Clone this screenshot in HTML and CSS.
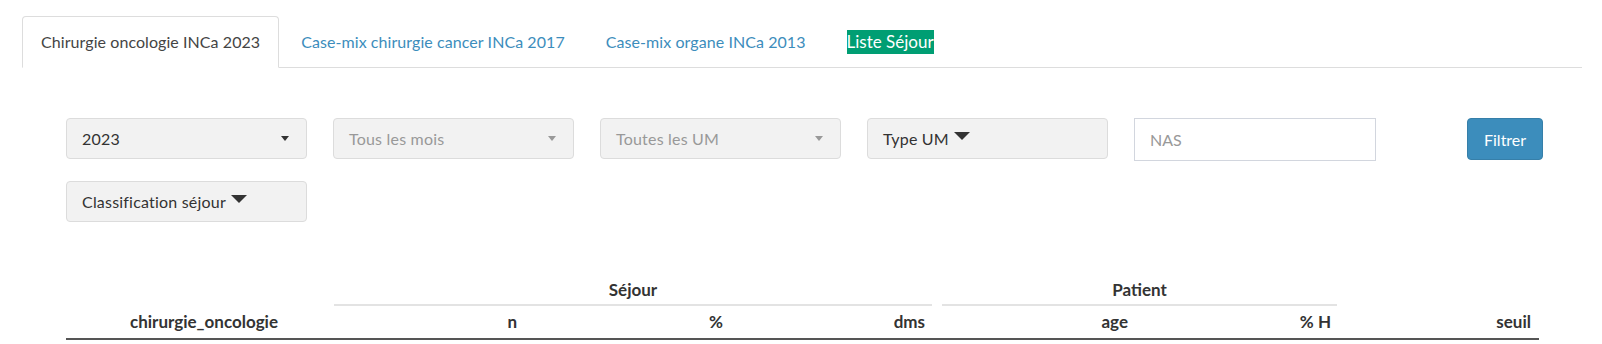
FILE: index.html
```html
<!DOCTYPE html>
<html lang="fr">
<head>
  <meta charset="UTF-8" />
  <title>Chirurgie oncologie</title>
  <link rel="stylesheet" href="styles.css">
</head>
<body>
  <ul class="nav-tabs">
    <li class="active"><a href="#">Chirurgie oncologie INCa 2023</a></li>
    <li><a href="#">Case-mix chirurgie cancer INCa 2017</a></li>
    <li><a href="#">Case-mix organe INCa 2013</a></li>
    <li><a href="#"><span class="tag-green">Liste Séjour</span></a></li>
  </ul>

  <div class="filters">
    <div class="select"><span>2023</span><i class="arrow"></i></div>
    <div class="select disabled"><span>Tous les mois</span><i class="arrow"></i></div>
    <div class="select disabled"><span>Toutes les UM</span><i class="arrow"></i></div>
    <div class="dropdown">Type UM <i class="caret"></i></div>
    <input class="form-control" type="text" placeholder="NAS" />
    <button class="btn-primary" type="button">Filtrer</button>
    <div class="dropdown">Classification séjour <i class="caret"></i></div>
  </div>

  <table class="stats">
    <colgroup>
      <col class="c-first"><col class="c-n"><col class="c-pct"><col class="c-dms">
      <col class="c-age"><col class="c-h"><col class="c-seuil">
    </colgroup>
    <thead>
      <tr class="groups">
        <th></th>
        <th colspan="3"><div class="group sejour">Séjour</div></th>
        <th colspan="2"><div class="group patient">Patient</div></th>
        <th></th>
      </tr>
      <tr class="cols">
        <th class="first">chirurgie_oncologie</th>
        <th>n</th>
        <th>%</th>
        <th>dms</th>
        <th>age</th>
        <th>% H</th>
        <th>seuil</th>
      </tr>
    </thead>
  </table>
</body>
</html>
```
FILE: styles.css
```css
body {
  margin: 0;
  font-family: 'Lato', 'Liberation Sans', sans-serif;
  font-size: 16px;
  color: #333;
  background: #ffffff;
}

/* tabs */
.nav-tabs {
  display: flex;
  list-style: none;
  margin: 16px 20px 0 22px;
  padding: 0;
  border-bottom: 1px solid #ddd;
}

.nav-tabs li {
  margin-right: 3px;
  margin-bottom: -1px;
}

.nav-tabs a {
  display: flex;
  align-items: center;
  box-sizing: border-box;
  height: 52px;
  padding: 0 18px;
  border: 1px solid transparent;
  border-radius: 4px 4px 0 0;
  color: #3c8dbc;
  text-decoration: none;
  line-height: 20px;
  letter-spacing: 0.07px;
}

.nav-tabs li.active a {
  color: #444;
  background: #fff;
  border-color: #ddd;
  border-bottom-color: transparent;
}

.tag-green {
  display: inline-block;
  background: #009e73;
  color: #fff;
  font-size: 17px;
  line-height: 24px;
  letter-spacing: 0;
}

/* filters */
.filters {
  display: grid;
  grid-template-columns: repeat(5, 241px) auto;
  column-gap: 26px;
  row-gap: 20px;
  margin: 50px 0 0 66px;
  letter-spacing: 0.2px;
}

.select, .dropdown {
  box-sizing: border-box;
  height: 41px;
  display: flex;
  align-items: center;
  padding: 0 15px;
  background: #f2f2f2;
  border: 1px solid #dcdcdc;
  border-radius: 4px;
  color: #333;
}

.select span {
  flex: 1;
}

.select.disabled {
  color: #999;
}

.arrow {
  width: 0;
  height: 0;
  border-top: 5px solid #333;
  border-left: 4px solid transparent;
  border-right: 4px solid transparent;
  margin-right: 2px;
}

.select.disabled .arrow {
  border-top-color: #999;
}

.caret {
  display: inline-block;
  width: 0;
  height: 0;
  margin-left: 5px;
  margin-top: -5px;
  border-top: 8px solid #333;
  border-left: 8px solid transparent;
  border-right: 8px solid transparent;
}

.form-control {
  box-sizing: border-box;
  width: 242px;
  height: 43px;
  padding: 0 15px;
  border: 1px solid #d2d6de;
  font-family: inherit;
  font-size: 16px;
  color: #333;
}

.form-control::placeholder {
  color: #999;
}

.btn-primary {
  justify-self: start;
  margin-left: 66px;
  height: 42px;
  padding: 0 16px;
  background: #3c8dbc;
  border: 1px solid #367fa9;
  border-radius: 4px;
  color: #fff;
  font-family: inherit;
  font-size: 16px;
}

/* table header */
.stats {
  margin: 52px 0 0 66px;
  width: 1473px;
  table-layout: fixed;
  border-collapse: collapse;
}

.c-first { width: 268px; }
.c-n { width: 191px; }
.c-pct { width: 206px; }
.c-dms { width: 202px; }
.c-age { width: 203px; }
.c-h { width: 203px; }
.c-seuil { width: 200px; }

.stats th {
  font-weight: bold;
  font-size: 17px;
  line-height: 20px;
  color: #333;
  padding: 0;
}

.groups th {
  padding-top: 6px;
  text-align: center;
}

.group {
  padding-bottom: 4px;
  border-bottom: 2px solid #e3e3e3;
}

.group.sejour {
  margin: 0 1px 0 0;
}

.group.patient {
  margin: 0 2px 0 9px;
}

.cols th {
  padding: 6px 8px;
  text-align: right;
  border-bottom: 2px solid #555;
}

.cols th.first {
  text-align: center;
  padding-left: 14px;
  padding-right: 6px;
}
```
